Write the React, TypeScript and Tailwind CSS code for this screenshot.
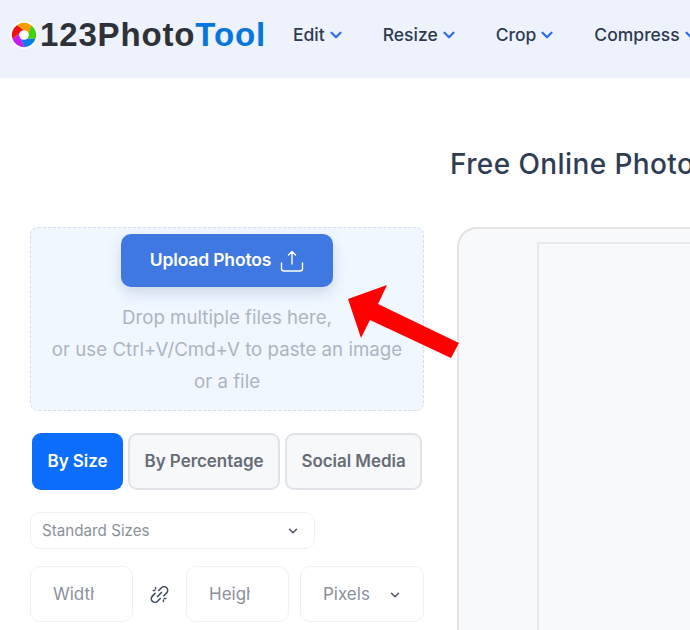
import { ChevronDown } from "lucide-react";

const navItems = ["Edit", "Resize", "Crop", "Compress"];
const bladeColors = ["#ff9d00", "#3fd40a", "#0b7ce6", "#c91df0", "#f01010"];

const Logo = () => (
  <svg width="28" height="28" viewBox="0 0 30 30" className="shrink-0">
    <circle cx="15" cy="15" r="15" fill="#ffffff" />
    {bladeColors.map((color, i) => (
      <path
        key={color}
        d="M15 10 7.38 4.47A13 13 0 0 1 22.66 4.5L19.76 13.46Z"
        fill={color}
        transform={`rotate(${i * 72} 15 15)`}
      />
    ))}
    <circle cx="15" cy="15" r="5.200" fill="#ffffff" />
  </svg>
);

const Header = () => (
  <header className="flex h-[78px] items-center overflow-hidden bg-[#edf2fd] pb-[8px] pl-[10px]">
    <Logo />
    <span className="ml-[2px] whitespace-nowrap font-['Liberation_Sans',sans-serif] text-[33px] font-bold tracking-[0.85px] text-[#2e3138]">
      123Photo<span className="text-[#0675dc]">Tool</span>
    </span>
    <nav className="ml-[27px] flex items-center gap-[38px]">
      {navItems.map((item) => (
        <div key={item} className="flex items-center gap-[2px] whitespace-nowrap text-[17.5px] font-medium text-[#2d3a50]">
          {item}
          <ChevronDown className="h-[18px] w-[18px] text-[#2f6fe4]" strokeWidth={3} />
        </div>
      ))}
    </nav>
  </header>
);

const UploadBox = () => (
  <div className="flex h-[184px] flex-col items-center rounded-lg border border-dashed border-[#d6deea] bg-[#f0f7ff] pt-[6px]">
    <button className="flex h-[53px] w-[212px] items-center justify-center gap-[9px] rounded-[10px] bg-[#3f78e0] text-[17.5px] font-semibold tracking-[-0.15px] text-white shadow-[0_6px_14px_rgba(60,90,150,0.2)]">
      Upload Photos
      <svg width="24" height="24" viewBox="0 0 24 24" fill="none" stroke="#ffffff" strokeWidth="1.4" strokeLinecap="round" strokeLinejoin="round">
        <path d="M12 15V2.500M8.500 6 12 2.500 15.500 6" />
        <path d="M1.500 14v5.500a2.500 2.500 0 0 0 2.500 2.500h16a2.500 2.500 0 0 0 2.500-2.500V14" />
      </svg>
    </button>
    <div className="mt-[15px] text-center text-[18.7px] leading-[32px] text-[#aeb4c2]">
      <p>Drop multiple files here,</p>
      <p className="whitespace-nowrap">or use Ctrl+V/Cmd+V to paste an image</p>
      <p>or a file</p>
    </div>
  </div>
);

const Tabs = () => (
  <div className="mt-[22px] flex h-[57px] gap-[5px] pl-[2px] text-[17px] font-semibold tracking-[-0.05px]">
    <div className="flex w-[91px] items-center justify-center rounded-[9px] bg-[#0d6efd] pt-px text-white">By Size</div>
    <div className="flex w-[152px] items-center justify-center rounded-[9px] border-2 border-[#e0e3e8] bg-[#f7f8fa] pt-px text-[#666d77]">By Percentage</div>
    <div className="flex w-[137px] items-center justify-center rounded-[9px] border-2 border-[#e0e3e8] bg-[#f7f8fa] pt-px text-[#666d77]">Social Media</div>
  </div>
);

const Inputs = () => (
  <>
    <div className="mt-[22px] flex h-[37px] w-[285px] items-center justify-between rounded-[10px] border border-[#edf0f5] bg-white pl-[11px] pr-[14px] pt-px text-[15.2px] text-[#8b919c]">
      Standard Sizes
      <ChevronDown className="h-[14px] w-[14px] text-[#4a5160]" strokeWidth={2.5} />
    </div>
    <div className="mt-[17px] flex h-[56px] items-center">
      <div className="flex h-full w-[103px] shrink-0 items-center rounded-[10px] border border-[#edf0f5] bg-white pl-[22px] pt-px text-[17px] text-[#8b919c]">
        <span className="w-[41px] overflow-hidden whitespace-nowrap">Width</span>
      </div>
      <svg width="19" height="19" viewBox="0 0 24 24" fill="none" stroke="#3f4a5c" strokeWidth="2" strokeLinecap="round" className="mx-[17px] shrink-0">
        <path d="M11 7 14.500 3.500a4.500 4.500 0 0 1 6.500 6.500l-3.500 3.500" />
        <path d="M13 17 9.500 20.500a4.500 4.500 0 0 1-6.500-6.500l3.500-3.500" />
        <path d="M9.500 14.500l5-5" />
        <path d="M4 7h2M7 3v2M18 17h2M17 19v2" strokeWidth="1.8" />
      </svg>
      <div className="flex h-full w-[103px] shrink-0 items-center rounded-[10px] border border-[#edf0f5] bg-white pl-[22px] pt-px text-[17px] text-[#8b919c]">
        <span className="w-[41px] overflow-hidden whitespace-nowrap">Height</span>
      </div>
      <div className="ml-[11px] flex h-full w-[124px] shrink-0 items-center justify-between rounded-[10px] border border-[#edf0f5] bg-white pl-[22px] pr-[21px] pt-px text-[17px] text-[#8b919c]">
        Pixels
        <ChevronDown className="h-[14px] w-[14px] text-[#4a5160]" strokeWidth={2.5} />
      </div>
    </div>
  </>
);

const App = () => (
  <div className="relative h-[630px] w-[690px] overflow-hidden bg-white font-['Inter',sans-serif]">
    <Header />
    <h1 className="mt-[66px] h-[40px] whitespace-nowrap pl-[450px] text-[28px] font-medium leading-[40px] tracking-[0.4px] text-[#2f3d54]">
      Free Online Photo Resizer
    </h1>
    <main className="mt-[43px] flex items-start pl-[30px]">
      <section className="w-[394px] shrink-0">
        <UploadBox />
        <Tabs />
        <Inputs />
      </section>
      <section className="ml-[33px] h-[500px] w-[400px] shrink-0 rounded-[20px] border-2 border-[#e2e3e5] bg-[#f8f9fb] pl-[78px] pt-[13px]">
        <div className="h-full border-2 border-[#e7e8ea]" />
      </section>
    </main>
    <svg width="690" height="630" className="pointer-events-none absolute left-0 top-0">
      <polygon points="348,299 387,285 378,304 459,343 451,358 370,320 361,338" fill="#fe0000" />
    </svg>
  </div>
);

export default App;
